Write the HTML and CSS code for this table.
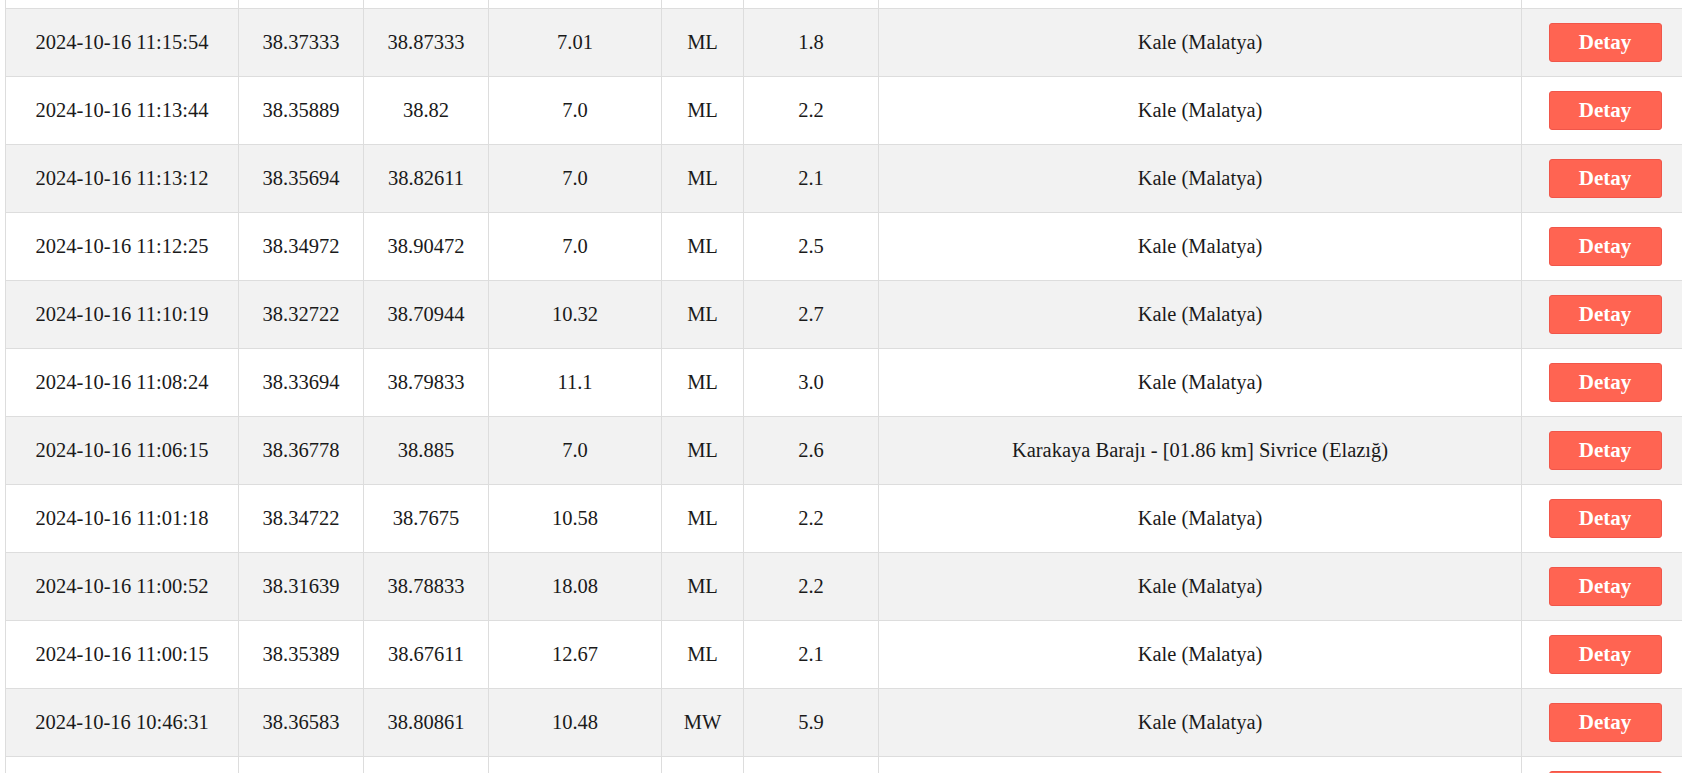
FILE: index.html
```html
<!DOCTYPE html>
<html lang="tr">
<head>
<meta charset="utf-8">
<title>Son Depremler</title>
<link rel="stylesheet" href="styles.css">
</head>
<body>
<div class="viewport">
<table class="quakes">
<colgroup>
<col class="c-date"><col class="c-lat"><col class="c-lon"><col class="c-depth"><col class="c-type"><col class="c-mag"><col class="c-place"><col class="c-act">
</colgroup>
<tbody>
<tr class="partial"><td></td><td></td><td></td><td></td><td></td><td></td><td></td><td><span class="btn btn-blank"></span></td></tr>
<tr><td>2024-10-16 11:15:54</td><td>38.37333</td><td>38.87333</td><td>7.01</td><td>ML</td><td>1.8</td><td>Kale (Malatya)</td><td><a class="btn" href="#">Detay</a></td></tr>
<tr><td>2024-10-16 11:13:44</td><td>38.35889</td><td>38.82</td><td>7.0</td><td>ML</td><td>2.2</td><td>Kale (Malatya)</td><td><a class="btn" href="#">Detay</a></td></tr>
<tr><td>2024-10-16 11:13:12</td><td>38.35694</td><td>38.82611</td><td>7.0</td><td>ML</td><td>2.1</td><td>Kale (Malatya)</td><td><a class="btn" href="#">Detay</a></td></tr>
<tr><td>2024-10-16 11:12:25</td><td>38.34972</td><td>38.90472</td><td>7.0</td><td>ML</td><td>2.5</td><td>Kale (Malatya)</td><td><a class="btn" href="#">Detay</a></td></tr>
<tr><td>2024-10-16 11:10:19</td><td>38.32722</td><td>38.70944</td><td>10.32</td><td>ML</td><td>2.7</td><td>Kale (Malatya)</td><td><a class="btn" href="#">Detay</a></td></tr>
<tr><td>2024-10-16 11:08:24</td><td>38.33694</td><td>38.79833</td><td>11.1</td><td>ML</td><td>3.0</td><td>Kale (Malatya)</td><td><a class="btn" href="#">Detay</a></td></tr>
<tr><td>2024-10-16 11:06:15</td><td>38.36778</td><td>38.885</td><td>7.0</td><td>ML</td><td>2.6</td><td>Karakaya Barajı - [01.86 km] Sivrice (Elazığ)</td><td><a class="btn" href="#">Detay</a></td></tr>
<tr><td>2024-10-16 11:01:18</td><td>38.34722</td><td>38.7675</td><td>10.58</td><td>ML</td><td>2.2</td><td>Kale (Malatya)</td><td><a class="btn" href="#">Detay</a></td></tr>
<tr><td>2024-10-16 11:00:52</td><td>38.31639</td><td>38.78833</td><td>18.08</td><td>ML</td><td>2.2</td><td>Kale (Malatya)</td><td><a class="btn" href="#">Detay</a></td></tr>
<tr><td>2024-10-16 11:00:15</td><td>38.35389</td><td>38.67611</td><td>12.67</td><td>ML</td><td>2.1</td><td>Kale (Malatya)</td><td><a class="btn" href="#">Detay</a></td></tr>
<tr><td>2024-10-16 10:46:31</td><td>38.36583</td><td>38.80861</td><td>10.48</td><td>MW</td><td>5.9</td><td>Kale (Malatya)</td><td><a class="btn" href="#">Detay</a></td></tr>
<tr class="partial"><td></td><td></td><td></td><td></td><td></td><td></td><td></td><td><span class="btn btn-blank"></span></td></tr>
</tbody>
</table>
</div>
</body>
</html>
```
FILE: styles.css
```css
html, body {
  margin: 0;
  padding: 0;
  background: #ffffff;
}
body {
  overflow: hidden;
  height: 773px;
  font-family: "Liberation Serif", "Times New Roman", serif;
  color: #1a1a1a;
}
.viewport {
  padding-left: 5px;
  margin-top: -60px;
}
.quakes {
  border-collapse: collapse;
  table-layout: fixed;
  width: 1683px;
  font-size: 20.5px;
}
.c-date { width: 233px; }
.c-lat { width: 125px; }
.c-lon { width: 125px; }
.c-depth { width: 173px; }
.c-type { width: 82px; }
.c-mag { width: 135px; }
.c-place { width: 643px; }
.c-act { width: 167px; }
.quakes td {
  border: 1px solid #dddddd;
  height: 39px;
  padding: 14px 4px;
  text-align: center;
  vertical-align: middle;
  line-height: 23px;
  white-space: nowrap;
}
.quakes tr:nth-child(even) td {
  background: #f2f2f2;
}
.btn {
  display: inline-flex;
  align-items: center;
  justify-content: center;
  box-sizing: border-box;
  width: 113px;
  height: 39px;
  background: #ff6452;
  border: 1px solid #f0564a;
  border-radius: 3px;
  color: #ffffff;
  font-weight: bold;
  font-size: 21px;
  text-decoration: none;
  vertical-align: middle;
}
```
